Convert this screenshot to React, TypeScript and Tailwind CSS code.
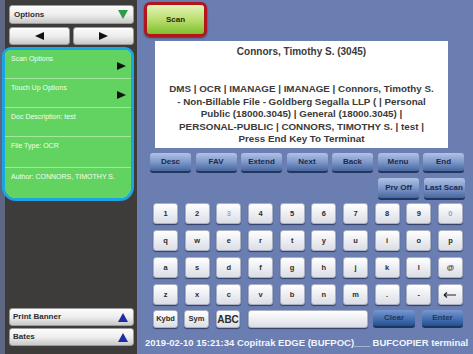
import React from "react";

const keyRows = [
  ["1", "2", "3", "4", "5", "6", "7", "8", "9", "0"],
  ["q", "w", "e", "r", "t", "y", "u", "i", "o", "p"],
  ["a", "s", "d", "f", "g", "h", "j", "k", "l", "@"],
  ["z", "x", "c", "v", "b", "n", "m", ".", "-", "back"],
];

const funcKeys = ["Desc", "FAV", "Extend", "Next", "Back", "Menu", "End"];

const options = [
  { label: "Scan Options", arrow: true, h: "h-[28px]" },
  { label: "Touch Up Options", arrow: true, h: "h-[28px]" },
  { label: "Doc Description: test", arrow: false, h: "h-[28px]" },
  { label: "File Type: OCR", arrow: false, h: "h-[30px]" },
  { label: "Author: CONNORS, TIMOTHY S.", arrow: false, h: "h-[30px]" },
];

const grayBtn =
  "rounded-[3px] border border-[#9a9a9a] bg-gradient-to-b from-[#fbfbfb] via-[#eeeeee] to-[#c9c9c9] shadow-[inset_0_1px_0_#fff]";

const whiteKey =
  "flex items-center justify-center rounded-[3px] border border-[#aab0c2] bg-gradient-to-b from-[#ffffff] to-[#dcdee6] shadow-[0_1px_1px_rgba(25,35,70,0.7)] text-[7.5px] font-bold text-[#2c2c2c]";

const blueBtn =
  "flex items-center justify-center rounded-[3px] border-b-2 border-[#23365e] bg-gradient-to-b from-[#b0c3e6] via-[#7e98ca] to-[#47679f] text-[8px] font-bold text-[#1c2948]";

function Tri({ dir, color }: { dir: "up" | "down" | "left" | "right"; color: string }) {
  const pts = {
    up: "5,0 10,9 0,9",
    down: "0,0 10,0 5,9",
    left: "9,0 9,8 0,4",
    right: "0,0 9,4 0,8",
  }[dir];
  return (
    <svg width="10" height="9" viewBox="0 0 10 9">
      <polygon points={pts} fill={color} />
    </svg>
  );
}

export default function App() {
  return (
    <div className="flex h-[354px] w-[473px] overflow-hidden bg-[#6a7eb2] font-['Liberation_Sans',Arial,sans-serif]">
      {/* left panel */}
      <aside className="flex w-[137px] flex-col border-l-[5px] border-[#5d6784] bg-[#3e3c3b] pb-[8px] pr-[3px] pt-[5px]">
        <div className={`${grayBtn} ml-[4px] flex h-[19px] items-center justify-between pl-[4px] pr-[5px]`}>
          <span className="text-[8px] font-bold text-[#2e2e2e]">Options</span>
          <Tri dir="down" color="#2f9a48" />
        </div>
        <div className="ml-[4px] mt-[3px] flex h-[18px] gap-[3px]">
          <div className={`${grayBtn} flex flex-1 items-center justify-center`}>
            <Tri dir="left" color="#111" />
          </div>
          <div className={`${grayBtn} flex flex-1 items-center justify-center`}>
            <Tri dir="right" color="#111" />
          </div>
        </div>
        <div className="-ml-[3px] mt-[2px] overflow-hidden rounded-b-[14px] rounded-t-[9px] border-[3px] border-[#1aa6e2] bg-[#a3e69e]">
          {options.map((o, i) => (
            <div
              key={o.label}
              className={`relative ${o.h} bg-[#62d260] pl-[6px] pt-[4px] text-[7px] leading-[9px] text-[#f4fff0] ${i > 0 ? "mt-[1px]" : ""}`}
            >
              {o.label}
              {o.arrow && (
                <span className="absolute right-[4px] top-[12px] flex">
                  <Tri dir="right" color="#111" />
                </span>
              )}
            </div>
          ))}
        </div>
        <div className="flex-1" />
        <div className={`${grayBtn} ml-[4px] flex h-[18px] items-center justify-between pl-[3px] pr-[5px]`}>
          <span className="text-[8px] font-bold text-[#2e2e2e]">Print Banner</span>
          <Tri dir="up" color="#1a2ea8" />
        </div>
        <div className={`${grayBtn} ml-[4px] mt-[2px] flex h-[18px] items-center justify-between pl-[3px] pr-[5px]`}>
          <span className="text-[8px] font-bold text-[#2e2e2e]">Bates</span>
          <Tri dir="up" color="#1a2ea8" />
        </div>
      </aside>

      {/* right area */}
      <main className="flex flex-1 flex-col pt-[2px]">
        <div className="ml-[7px] h-[35px] w-[63px] rounded-[6px] border-[3px] border-[#b3141e] shadow-[0_1px_2px_rgba(0,0,0,0.5)]">
          <div className="flex h-full items-center justify-center rounded-[3px] bg-gradient-to-b from-[#e6f3b8] via-[#b9df6c] to-[#7fbf2c] text-[8px] font-bold text-[#1f2a10]">
            Scan
          </div>
        </div>

        <div className="ml-[18px] mt-[4px] flex h-[107px] w-[293px] flex-col items-center bg-white pt-[5px] text-center font-bold text-[#3a3a3a]">
          <div className="text-[10px] leading-[12px]">Connors, Timothy S. (3045)</div>
          <div className="mt-[25px] text-[9.8px] leading-[12.5px]">
            DMS | OCR | IMANAGE | IMANAGE | Connors, Timothy S.
            <br />- Non-Billable File - Goldberg Segalla LLP ( | Personal
            <br />
            Public (18000.3045) | General (18000.3045) |
            <br />
            PERSONAL-PUBLIC | CONNORS, TIMOTHY S. | test |
            <br />
            Press End Key To Terminat
          </div>
        </div>

        <div className="ml-[13px] mt-[5px] flex h-[20px] gap-[4.5px]">
          {funcKeys.map((k) => (
            <div key={k} className={`${blueBtn} w-[41px]`}>
              {k}
            </div>
          ))}
        </div>

        <div className="ml-[241px] mt-[5px] flex h-[22px] gap-[4.5px]">
          <div className={`${blueBtn} w-[41px]`}>Prv Off</div>
          <div className={`${blueBtn} w-[41px] text-[7px]`}>Last Scan</div>
        </div>

        <div className="ml-[16px] mt-[3px] grid w-[310px] grid-cols-10 gap-x-[6.6px] gap-y-[6px]">
          {keyRows.flat().map((k, i) => (
            <div
              key={i}
              className={`${whiteKey} h-[21px] ${k === "3" || k === "0" ? "text-[#8fa6dd]" : ""}`}
            >
              {k === "back" ? (
                <svg width="14" height="6" viewBox="0 0 14 6">
                  <path d="M1 3 H13 M1 3 L4 0.5 M1 3 L4 5.5" stroke="#222" strokeWidth="1.2" fill="none" />
                </svg>
              ) : (
                k
              )}
            </div>
          ))}
        </div>

        <div className="ml-[16px] mt-[5px] flex h-[18px] w-[310px]">
          <div className={`${whiteKey} w-[25px]`}>Kybd</div>
          <div className={`${whiteKey} ml-[6px] w-[25px]`}>Sym</div>
          <div className={`${whiteKey} ml-[7px] w-[24px] text-[10px]`}>ABC</div>
          <div className={`${whiteKey} ml-[8px] w-[120px]`} />
          <div className="ml-[5px] flex w-[42px] items-center justify-center rounded-[3px] border-b-2 border-[#1c3560] bg-gradient-to-b from-[#7797cf] via-[#4b74b4] to-[#234f91] text-[8px] font-bold text-[#1d3767]">
            Clear
          </div>
          <div className="ml-[7px] flex w-[41px] items-center justify-center rounded-[3px] border-b-2 border-[#1c3560] bg-gradient-to-b from-[#7797cf] via-[#4b74b4] to-[#234f91] text-[8px] font-bold text-[#1d3767]">
            Enter
          </div>
        </div>

        <div className="ml-[8px] mt-[9px] whitespace-nowrap text-[9.5px] font-bold leading-[11px] text-[#f3f5fb]">
          2019-02-10 15:21:34 Copitrak EDGE (BUFPOC)___ BUFCOPIER terminal
        </div>
      </main>
    </div>
  );
}
